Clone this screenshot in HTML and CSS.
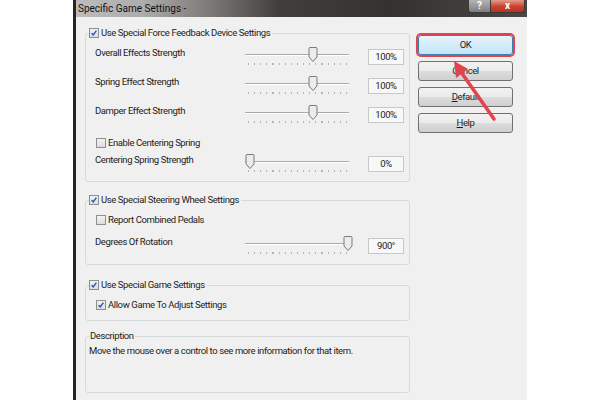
FILE: index.html
```html
<!DOCTYPE html>
<html lang="en">
<head>
    <meta charset="UTF-8">
    <title>Specific Game Settings</title>
    <link rel="stylesheet" href="styles.css">
</head>
<body>

<div class="window">
    <div class="titlebar">
        <span class="title">Specific Game Settings -</span>
        <div class="caption-btns">
            <span class="cap-help">?</span>
            <span class="cap-close">x</span>
        </div>
    </div>

    <div class="client">
        <div class="groups">

            <div class="group g-ffb">
                <div class="legend"><span class="cb on"><svg viewBox="0 0 10 10"><path d="M2 5.2 L4 7.4 L8 2"/></svg></span>Use Special Force Feedback Device Settings</div>
                <div class="slider-row first">
                    <span class="lbl">Overall Effects Strength</span>
                    <div class="slider"><svg class="thumb" style="left: 63px" viewBox="0 0 10 15"><path d="M1 1.5 Q1 0.5 2 0.5 H8 Q9 0.5 9 1.5 V10 L5 14.5 L1 10 Z"/></svg></div>
                    <span class="val">100%</span>
                </div>
                <div class="slider-row">
                    <span class="lbl">Spring Effect Strength</span>
                    <div class="slider"><svg class="thumb" style="left: 63px" viewBox="0 0 10 15"><path d="M1 1.5 Q1 0.5 2 0.5 H8 Q9 0.5 9 1.5 V10 L5 14.5 L1 10 Z"/></svg></div>
                    <span class="val">100%</span>
                </div>
                <div class="slider-row">
                    <span class="lbl">Damper Effect Strength</span>
                    <div class="slider"><svg class="thumb" style="left: 63px" viewBox="0 0 10 15"><path d="M1 1.5 Q1 0.5 2 0.5 H8 Q9 0.5 9 1.5 V10 L5 14.5 L1 10 Z"/></svg></div>
                    <span class="val">100%</span>
                </div>
                <div class="check-row"><span class="cb"></span>Enable Centering Spring</div>
                <div class="slider-row">
                    <span class="lbl">Centering Spring Strength</span>
                    <div class="slider"><svg class="thumb" style="left: 0px" viewBox="0 0 10 15"><path d="M1 1.5 Q1 0.5 2 0.5 H8 Q9 0.5 9 1.5 V10 L5 14.5 L1 10 Z"/></svg></div>
                    <span class="val">0%</span>
                </div>
            </div>

            <div class="group g-wheel">
                <div class="legend"><span class="cb on"><svg viewBox="0 0 10 10"><path d="M2 5.2 L4 7.4 L8 2"/></svg></span>Use Special Steering Wheel Settings</div>
                <div class="check-row"><span class="cb"></span>Report Combined Pedals</div>
                <div class="slider-row">
                    <span class="lbl">Degrees Of Rotation</span>
                    <div class="slider"><svg class="thumb" style="left: 98px" viewBox="0 0 10 15"><path d="M1 1.5 Q1 0.5 2 0.5 H8 Q9 0.5 9 1.5 V10 L5 14.5 L1 10 Z"/></svg></div>
                    <span class="val">900°</span>
                </div>
            </div>

            <div class="group g-game">
                <div class="legend"><span class="cb on"><svg viewBox="0 0 10 10"><path d="M2 5.2 L4 7.4 L8 2"/></svg></span>Use Special Game Settings</div>
                <div class="check-row"><span class="cb on"><svg viewBox="0 0 10 10"><path d="M2 5.2 L4 7.4 L8 2"/></svg></span>Allow Game To Adjust Settings</div>
            </div>

            <div class="group g-desc">
                <div class="legend">Description</div>
                <p class="desc">Move the mouse over a control to see more information for that item.</p>
            </div>

        </div>

        <div class="buttons">
            <div class="btn ok">OK</div>
            <div class="btn">Cancel</div>
            <div class="btn"><u>D</u>efault</div>
            <div class="btn"><u>H</u>elp</div>
        </div>
    </div>
</div>

<!-- red annotation arrow pointing at OK -->
<svg class="arrow" viewBox="0 0 600 400">
    <line x1="494" y1="119" x2="461" y2="72" />
    <polygon points="454,61 468,69 456,78" />
</svg>

</body>
</html>
```

FILE: styles.css
```css
body {
    margin: 0;
    background: #fff;
    font-family: Roboto, "Liberation Sans", sans-serif;
    font-size: 9.5px;
    letter-spacing: -0.4px;
    color: #1c1c1c;
}
.window {
    margin-left: 73px;
    width: 454px;
    height: 400px;
    box-sizing: border-box;
    border-left: 3px solid #262626;
    display: flex;
    flex-direction: column;
}
.titlebar {
    height: 17px;
    flex-shrink: 0;
    display: flex;
    justify-content: space-between;
    align-items: flex-start;
    background: linear-gradient(to right, #bcbcbc 0%, #acacac 15%, #7b7875 30%, #423e3b 45%, #35312e 70%, #4b4744 100%);
    letter-spacing: 0;
}
.title {
    padding-left: 2px;
    line-height: 17px;
    font-size: 10px;
    color: #111;
}
.caption-btns {
    display: flex;
    margin-right: 2px;
}
.cap-help, .cap-close {
    height: 13px;
    line-height: 12px;
    text-align: center;
    color: #fff;
    font-weight: bold;
    font-size: 10px;
    border: 1px solid #3a3a3a;
    border-top: none;
    box-sizing: border-box;
}
.cap-help {
    width: 22px;
    background: linear-gradient(#b4b4b4, #7d7d7d);
    border-radius: 0 0 0 3px;
    border-right: none;
}
.cap-close {
    width: 35px;
    background: linear-gradient(#e59a88, #c8432f 55%, #b9321f);
    border-radius: 0 0 3px 0;
}
.client {
    flex: 1;
    background: #f0f0f0;
    display: flex;
    align-items: flex-start;
    gap: 8px;
    padding: 16px 0 0 9px;
}
.groups {
    width: 325px;
    display: flex;
    flex-direction: column;
}
.group {
    border: 1px solid #d6dadd;
    border-radius: 3px;
    padding: 0 5px 0 9px;
}
.legend {
    display: flex;
    align-items: center;
    gap: 2px;
    width: max-content;
    height: 12px;
    line-height: 12px;
    margin: -7px 0 0 -6px;
    padding-right: 2px;
    background: #f0f0f0;
}
.cb {
    width: 10px;
    height: 10px;
    box-sizing: border-box;
    border: 1px solid #8e8f8f;
    background: linear-gradient(#f3f3f3, #dcdcdc);
    display: inline-block;
}
.cb.on {
    background: linear-gradient(#eef2f8, #d6dde8);
}
.cb svg {
    display: block;
    width: 8px;
    height: 8px;
    fill: none;
    stroke: #2b4b93;
    stroke-width: 1.6;
}
.check-row {
    display: flex;
    align-items: center;
    gap: 2px;
    height: 12px;
    line-height: 12px;
    margin: 8px 0 0 1px;
}
.slider-row {
    display: flex;
    height: 29px;
}
.slider-row.first {
    margin-top: 3px;
}
.lbl {
    width: 150px;
    margin-top: 5px;
    line-height: 12px;
}
.slider {
    position: relative;
    width: 104px;
    height: 24px;
    margin-right: 19px;
    background:
        linear-gradient(#a9a9a9, #a9a9a9) 0 12px / 100% 1px no-repeat,
        linear-gradient(#fff, #fff) 0 13px / 100% 1px no-repeat,
        repeating-linear-gradient(to right, #b4b4b4 0 1px, transparent 1px 6.125px) 3px 21px / 99px 2px no-repeat;
}
.thumb {
    position: absolute;
    top: 5px;
    width: 10px;
    height: 15px;
    fill: #ececec;
    stroke: #7a7a7a;
    stroke-width: 1;
}
.val {
    width: 36px;
    height: 16px;
    margin-top: 7px;
    box-sizing: border-box;
    border: 1px solid #c8c8c8;
    background: #f8f8f8;
    text-align: center;
    line-height: 14px;
}
.g-ffb {
    padding-bottom: 3px;
}
.g-wheel {
    margin-top: 18px;
    padding-bottom: 4px;
}
.g-wheel .slider-row {
    margin-top: 5px;
}
.g-game {
    margin-top: 20px;
    padding-bottom: 9px;
}
.g-desc {
    margin-top: 15px;
    height: 57px;
    box-sizing: border-box;
    padding-left: 3px;
}
.g-desc .legend {
    margin-left: 0;
    padding: 0 1px;
}
.desc {
    margin: 3px 0 0;
    line-height: 12px;
}
.buttons {
    width: 95px;
    margin-top: 2px;
    display: flex;
    flex-direction: column;
    gap: 6px;
}
.btn {
    height: 20px;
    box-sizing: border-box;
    border: 1px solid #707070;
    border-radius: 3px;
    background: linear-gradient(#f2f2f2 0%, #ebebeb 50%, #dddddd 51%, #cfcfcf 100%);
    text-align: center;
    line-height: 18px;
}
.btn.ok {
    border-color: #3c7fb1;
    background: linear-gradient(#e5f4fc, #c4e4f7);
    box-shadow: 0 0 0 2px #e2434c;
}
.arrow {
    position: absolute;
    left: 0;
    top: 0;
    width: 600px;
    height: 400px;
    pointer-events: none;
}
.arrow line {
    stroke: #e2434c;
    stroke-width: 3.5;
    stroke-linecap: round;
}
.arrow polygon {
    fill: #e2434c;
}
```
